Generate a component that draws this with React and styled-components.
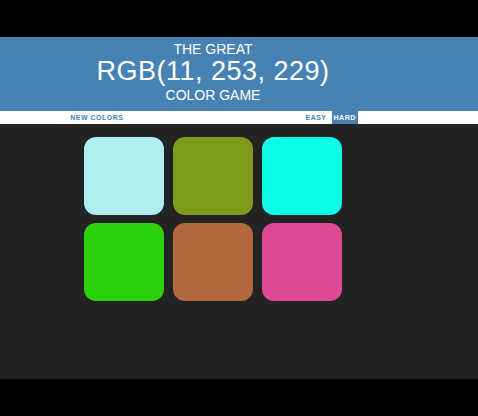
import React from "react";
import styled, { createGlobalStyle } from "styled-components";

const Global = createGlobalStyle`
  html, body { margin: 0; padding: 0; background: #000; }
  body { font-family: "Liberation Sans", Arial, sans-serif; }
`;

const Page = styled.div`
  width: 478px;
  height: 416px;
  padding-top: 37px;
  box-sizing: border-box;
  background: #000;
  display: flex;
  flex-direction: column;
`;

const Header = styled.h1`
  margin: 0;
  background: steelblue;
  color: #fff;
  font-weight: normal;
  text-transform: uppercase;
  padding: 3px 52px 4px 0;
  text-align: center;
`;

const Line = styled.span`
  display: block;
  font-size: ${(p) => (p.$big ? "27px" : "14px")};
  line-height: ${(p) => p.$lh}px;
  letter-spacing: ${(p) => (p.$big ? "0.5px" : "0")};
`;

const Stripe = styled.div`
  background: #fff;
  height: 13px;
  padding-right: 52px;
  display: flex;
  align-items: stretch;
  justify-content: center;
`;

const StripeButton = styled.button`
  border: none;
  margin: 0;
  padding: 0 2px;
  font-family: "Liberation Sans", Arial, sans-serif;
  font-weight: bold;
  font-size: 7px;
  letter-spacing: 0.5px;
  text-transform: uppercase;
  background: ${(p) => (p.$selected ? "steelblue" : "#fff")};
  color: ${(p) => (p.$selected ? "#fff" : "steelblue")};
  display: flex;
  align-items: center;
`;

const Message = styled.span`
  width: 178px;
`;

const Gap = styled.span`
  width: 3px;
`;

const Board = styled.div`
  flex: 1;
  background: #232323;
  padding: 13px 52px 0 0;
  display: flex;
  justify-content: center;
  align-items: flex-start;
  margin-bottom: 37px;
`;

const Grid = styled.div`
  display: grid;
  grid-template-columns: repeat(3, 80px);
  grid-auto-rows: 78px;
  column-gap: 9px;
  row-gap: 8px;
`;

const Square = styled.div`
  border-radius: 12px;
  background: ${(p) => p.$color};
`;

const colors = [
  "rgb(174, 238, 238)",
  "rgb(126, 154, 26)",
  "rgb(11, 253, 229)",
  "rgb(43, 209, 10)",
  "rgb(179, 103, 60)",
  "rgb(221, 74, 147)",
];

export default function App() {
  return (
    <>
      <Global />
      <Page>
        <Header>
          <Line $lh={18}>The Great</Line>
          <Line $big $lh={26}>RGB(11, 253, 229)</Line>
          <Line $lh={23}>Color Game</Line>
        </Header>
        <Stripe>
          <StripeButton>New Colors</StripeButton>
          <Message />
          <StripeButton>Easy</StripeButton>
          <Gap />
          <StripeButton $selected>Hard</StripeButton>
        </Stripe>
        <Board>
          <Grid>
            {colors.map((c) => (
              <Square key={c} $color={c} />
            ))}
          </Grid>
        </Board>
      </Page>
    </>
  );
}
